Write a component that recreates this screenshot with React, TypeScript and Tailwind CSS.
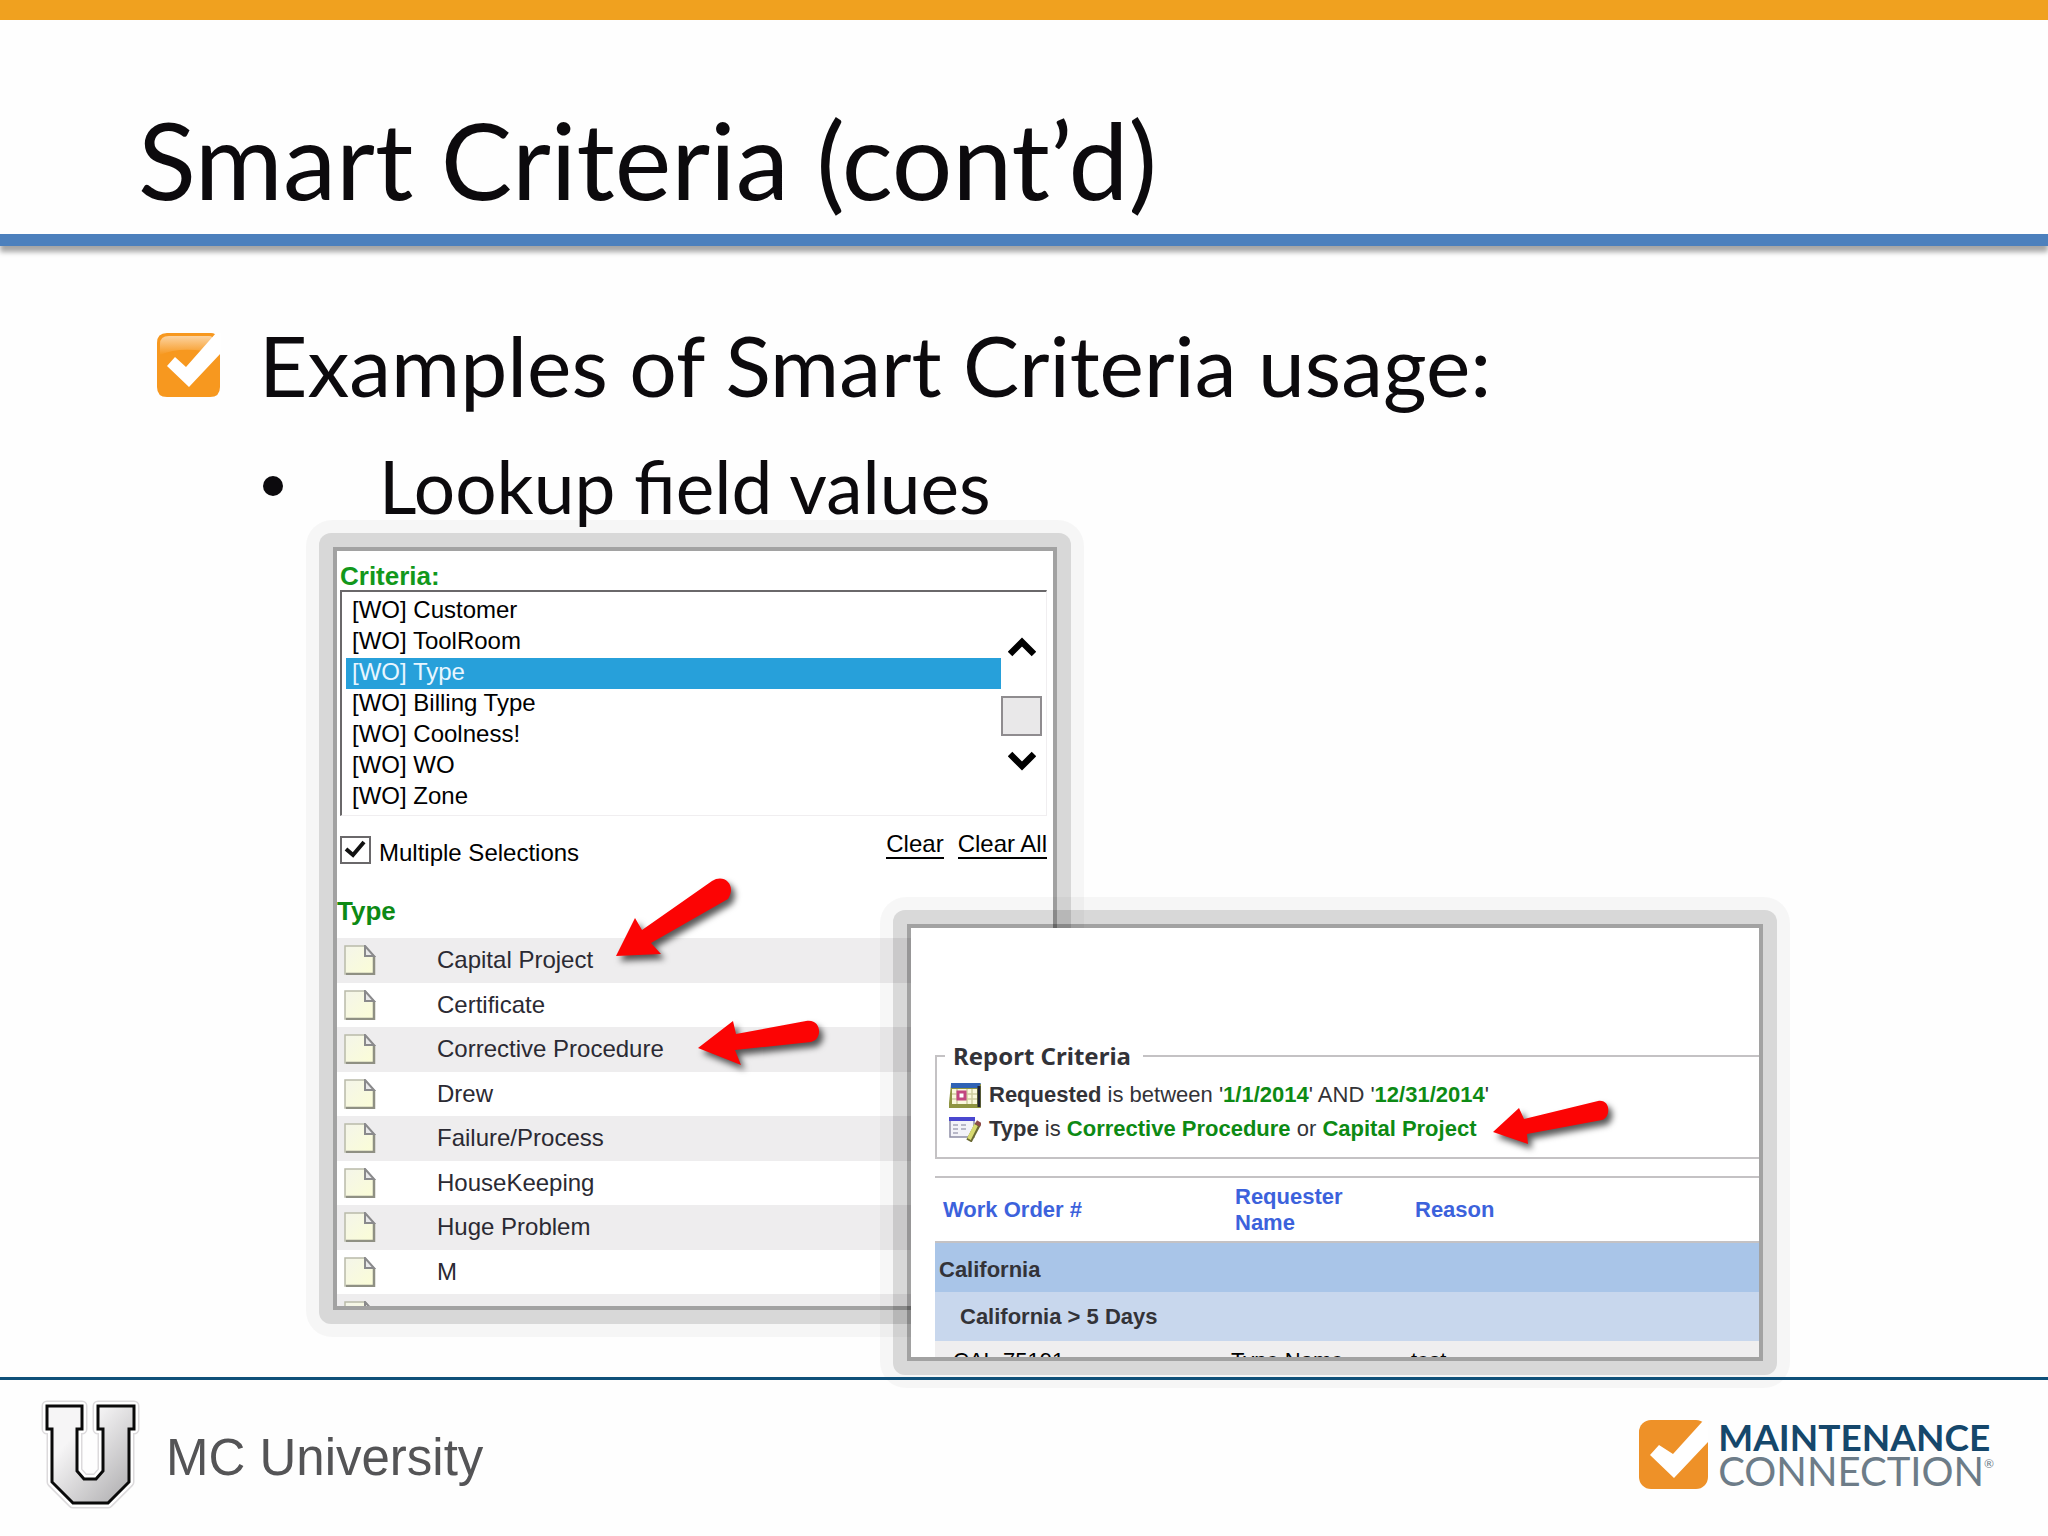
import type { ReactNode } from "react";

const criteria = ["Customer", "ToolRoom", "Type", "Billing Type", "Coolness!", "WO", "Zone"];

const types = [
   "Capital Project",
   "Certificate",
   "Corrective Procedure",
   "Drew",
   "Failure/Process",
   "HouseKeeping",
   "Huge Problem",
   "M",
];

function Frame({ children }: { children: ReactNode }) {
   return (
      <div className="rounded-[26px] bg-black/3 p-[13px]">
         <div className="rounded-xl bg-black/12 p-[14px]">
            <div className="bg-black/25 p-1">
               <div className="overflow-hidden bg-white">{children}</div>
            </div>
         </div>
      </div>
   );
}

function BulletCheck() {
   return (
      <svg className="size-16 shrink-0" viewBox="0 0 64 64" aria-hidden="true">
         <defs>
            <linearGradient id="gloss" x1="0" y1="0" x2="0" y2="1">
               <stop offset="0" stopColor="#fcd3a0" />
               <stop offset="1" stopColor="#f7981f" />
            </linearGradient>
         </defs>
         <path d="M10 0H54Q59 0 59 4L63 20V54Q63 64 53 64H10Q0 64 0 54V10Q0 0 10 0Z" fill="#f7981f" />
         <path d="M3 22V11Q3 3 12 3H52Q57 3 55 8L47 18Q20 14 3 22Z" fill="url(#gloss)" />
         <path d="M10 33L18 24L29 34L59 0H64V20L32 54Z" fill="#fff" />
      </svg>
   );
}

function PageIcon() {
   return (
      <svg className="h-[30px] w-8" viewBox="0 0 32 30" aria-hidden="true">
         <defs>
            <linearGradient id="paper" x1="0" y1="0" x2="1" y2="1">
               <stop offset="0" stopColor="#f4f5ea" />
               <stop offset="1" stopColor="#fbfdd6" />
            </linearGradient>
         </defs>
         <path d="M1 1H21L30 11V29H1Z" fill="url(#paper)" stroke="#b9baa9" strokeWidth="1.5" />
         <path d="M30 11V29H2" fill="none" stroke="#8f9083" strokeWidth="2.5" />
         <path d="M21 1L30 11H21Z" fill="#e9e9ea" stroke="#8a8a8c" strokeWidth="2" />
      </svg>
   );
}

function CalendarIcon() {
   return (
      <svg className="h-[25px] w-8 shrink-0" viewBox="0 0 32 25" aria-hidden="true">
         <path d="M2 1H32V25H0V20Z" fill="#8f9440" />
         <rect x="3" y="6" width="25" height="15" fill="#fbf8dc" />
         <path d="M3 11H28M3 16H28M8 6V21M18 6V21M23 6V21" stroke="#cfcda0" strokeWidth="1.5" />
         <path d="M2 0H32L29 5H2Z" fill="#2f62b5" />
         <path d="M30 3V24" stroke="#1f2130" strokeWidth="3" />
         <rect x="9" y="9" width="7" height="7" fill="#fff" stroke="#c2457f" strokeWidth="3" />
      </svg>
   );
}

function FormIcon() {
   return (
      <svg className="h-[25px] w-8 shrink-0" viewBox="0 0 32 25" aria-hidden="true">
         <rect x="1" y="1" width="24" height="19" fill="#f3f3f8" stroke="#8d8da5" strokeWidth="1.5" />
         <rect width="26" height="4" fill="#4a47cf" />
         <path d="M4 8H9M12 8H17M4 12H9M12 12H17M4 16H9" stroke="#b8b8c8" strokeWidth="2" />
         <path d="M29 7L20 24" stroke="#6b6a33" strokeWidth="6" />
         <path d="M27 8L20 22" stroke="#d8da70" strokeWidth="4" />
         <path d="M27 5L32 8" stroke="#8e4b48" strokeWidth="4" />
      </svg>
   );
}

function Chevron({ d }: { d: string }) {
   return (
      <svg className="h-[22px] w-7" viewBox="0 0 28 22" aria-hidden="true">
         <path d={d} fill="none" stroke="#000" strokeWidth="6.5" />
      </svg>
   );
}

function CriteriaPanel() {
   return (
      <Frame>
         <div className="h-[755px] w-[716px] text-2xl/[30px] text-black">
            <div className="pt-[11px] pr-1.5 pl-[3px]">
               <label htmlFor="criteria" className="block h-7 text-[26px]/7 font-bold text-[#12981c]">
                  Criteria:
               </label>
               <div className="flex h-[226px] border border-t-2 border-l-2 border-[#f0eef0] border-t-[#6a686a] border-l-[#6a686a] pt-1 pb-1.5 pl-1">
                  <select
                     id="criteria"
                     multiple
                     size={7}
                     defaultValue={["Type"]}
                     className="h-[214px] min-w-0 flex-1 appearance-none overflow-hidden bg-none p-0 outline-none"
                  >
                     {criteria.map((name) => (
                        <option
                           key={name}
                           value={name}
                           className="block h-[31px] min-h-0 p-0 pl-1.5 text-2xl/[34px] checked:bg-[linear-gradient(#27a0da,#27a0da)] checked:[-webkit-text-fill-color:#e8f6ff]"
                        >
                           [WO] {name}
                        </option>
                     ))}
                  </select>
                  <div className="flex w-[45px] flex-col items-center pt-10 pr-1">
                     <button aria-label="Scroll up">
                        <Chevron d="M2 18L14 6L26 18" />
                     </button>
                     <div className="mt-[38px] h-10 w-full border-2 border-[#8f8c8f] bg-[#e9e8e9]" />
                     <button aria-label="Scroll down" className="mt-3.5">
                        <Chevron d="M2 4L14 16L26 4" />
                     </button>
                  </div>
               </div>
               <div className="flex items-start justify-between pt-3.5">
                  <div className="flex items-start pt-1">
                     <span className="relative mt-0.5 flex">
                        <input
                           id="multiple"
                           type="checkbox"
                           defaultChecked
                           className="h-7 w-[31px] appearance-none border-2 border-[#6a686a] bg-white"
                        />
                        <svg className="pointer-events-none absolute inset-0" viewBox="0 0 31 28" aria-hidden="true">
                           <path d="M6 13L13 19L24 6" fill="none" stroke="#111" strokeWidth="4" />
                        </svg>
                     </span>
                     <label htmlFor="multiple" className="pt-1 pl-2">
                        Multiple Selections
                     </label>
                  </div>
                  <div className="flex gap-3.5">
                     <a href="#clear" className="border-b-2 border-black leading-[27px]">Clear</a>
                     <a href="#clear-all" className="border-b-2 border-black leading-[27px]">Clear All</a>
                  </div>
               </div>
            </div>
            <h2 className="mt-[29px] h-[41px] text-[26px]/7 font-bold text-[#0d8a14]">Type</h2>
            <ul className="grid h-[356px] auto-rows-fr">
               {types.map((name) => (
                  <li key={name} className="flex items-center pl-[7px] text-[#2b2a33] odd:bg-[#eeedee]">
                     <PageIcon />
                     <span className="pl-[61px]">{name}</span>
                  </li>
               ))}
            </ul>
            <div className="h-11 bg-[#eeedee] pt-[7px] pl-[7px]">
               <PageIcon />
            </div>
         </div>
      </Frame>
   );
}

function ReportPanel() {
   return (
      <Frame>
         <div className="h-[429px] w-[848px] pt-[114px] pl-6 text-[22px]/[26px] text-[#333338]">
            <fieldset className="h-[117px] border-2 border-r-0 border-[#c4c2c4] pl-3">
               <legend className="-ml-1 pr-3 pl-2 font-['Noto_Sans'] text-2xl/7 font-bold">Report Criteria</legend>
               <p className="mt-3 flex items-center gap-2">
                  <CalendarIcon />
                  <span>
                     <b>Requested</b> is between '<b className="text-[#0d8a14]">1/1/2014</b>' AND '
                     <b className="text-[#0d8a14]">12/31/2014</b>'
                  </span>
               </p>
               <p className="mt-2 flex items-center gap-2">
                  <FormIcon />
                  <span>
                     <b>Type</b> is <b className="text-[#0d8a14]">Corrective Procedure</b> or{" "}
                     <b className="text-[#0d8a14]">Capital Project</b>
                  </span>
               </p>
            </fieldset>
            <table className="mt-[17px] w-full table-fixed border-collapse text-left">
               <colgroup>
                  <col className="w-[292px]" />
                  <col className="w-[180px]" />
                  <col />
               </colgroup>
               <thead className="border-y-2 border-[#c4c2c4] text-[#3c62dc]">
                  <tr className="h-[65px]">
                     <th className="pl-2">Work Order #</th>
                     <th className="pr-10 pl-2">Requester Name</th>
                     <th className="pl-2">Reason</th>
                  </tr>
               </thead>
               <tbody>
                  <tr className="h-[50px] bg-[#a9c5e8]">
                     <th colSpan={3} className="pt-1 pl-1">California</th>
                  </tr>
                  <tr className="h-[49px] bg-[#c8d7ed]">
                     <th colSpan={3} className="pl-[25px]">California &gt; 5 Days</th>
                  </tr>
                  <tr className="h-10 bg-[#efeeef] text-black">
                     <td className="pl-[18px]">CAL-75191</td>
                     <td className="pl-1">Type Name</td>
                     <td className="pl-1">test</td>
                  </tr>
               </tbody>
            </table>
         </div>
      </Frame>
   );
}

function Arrows() {
   return (
      <svg
         className="pointer-events-none absolute top-[330px] left-[280px] h-[350px] w-[1100px] drop-shadow-[4px_5px_3px_rgba(0,0,0,0.65)]"
         viewBox="586 850 1100 350"
         fill="#fc0404"
         aria-hidden="true"
      >
         <path d="M616 956L635 918L642 930L712 881C724 873 737 885 728 899L651 943L661 954Z" />
         <path d="M698 1048L733 1021L736 1034L806 1021C822 1018 823 1040 811 1042L735 1050L741 1065Z" />
         <path d="M1493 1132L1519 1108L1524 1119L1598 1101C1611 1099 1611 1117 1602 1120L1527 1134L1528 1144Z" />
      </svg>
   );
}

function UniversityLogo() {
   const shape = "M7 7H42V30H37V72L44 80H56L63 72V30H58V7H94V30H89V83L68 104H33L12 83V30H7Z";
   return (
      <svg className="h-[110px] w-[102px]" viewBox="0 0 102 110" aria-hidden="true">
         <defs>
            <linearGradient id="steel" x1="0" y1="0" x2="1" y2="1">
               <stop offset="0.3" stopColor="#f6f5f6" />
               <stop offset="1" stopColor="#a9a8aa" />
            </linearGradient>
         </defs>
         <path d={shape} fill="none" stroke="#dcdadc" strokeWidth="11" strokeLinejoin="round" />
         <path d={shape} fill="none" stroke="#fff" strokeWidth="8" strokeLinejoin="round" />
         <path d={shape} fill="url(#steel)" stroke="#0a0a0a" strokeWidth="3" />
      </svg>
   );
}

function BrandLogo() {
   return (
      <div className="flex items-center gap-2.5 font-[Lato] text-[37px]/[35px]">
         <svg className="size-[69px]" viewBox="0 0 69 69" aria-hidden="true">
            <rect width="69" height="69" rx="12" fill="#ee9128" />
            <path d="M11 35L20 25L34 34L63 2L69 0V22L35 58Z" fill="#fff" />
         </svg>
         <div>
            <p className="font-bold text-[#15476b]">MAINTENANCE</p>
            <p className="flex text-[40px] text-[#6d7c88]">
               CONNECTION<sup className="top-0 pt-1 text-xs/3">®</sup>
            </p>
         </div>
      </div>
   );
}

export default function App() {
   return (
      <main className="flex min-h-screen flex-col overflow-hidden bg-[#fefefe] font-['Liberation_Sans',sans-serif]">
         <header className="border-t-[20px] border-b-[12px] border-[#f0a11f] border-b-[#4c80bd] shadow-[0_6px_5px_rgba(0,0,0,0.35)]">
            <h1 className="px-[138px] pt-[79px] pb-[15px] font-[Lato] text-[107px]/[120px] text-[#0c0a0d]">
               Smart Criteria (cont’d)
            </h1>
         </header>
         <section className="flex-1 px-[157px] pt-[71px] font-[Lato] text-[#0c0a0d]">
            <div className="flex items-center gap-[38px]">
               <BulletCheck />
               <h2 className="text-[84px]/[96px]">Examples of Smart Criteria usage:</h2>
            </div>
            <ul className="pt-[31px] pl-[106px]">
               <li className="flex items-center gap-24 text-[73px]/[84px]">
                  <span className="size-5 rounded-full bg-[#0c0a0d]" />
                  Lookup field values
               </li>
            </ul>
            <div className="relative -mt-2 ml-[149px] h-[856px] font-['Liberation_Sans',sans-serif]">
               <div className="absolute top-0 left-0">
                  <CriteriaPanel />
               </div>
               <div className="absolute top-[377px] left-[574px]">
                  <ReportPanel />
               </div>
               <Arrows />
            </div>
         </section>
         <footer className="relative flex h-[159px] items-center justify-between border-t-[3px] border-[#0f5079] pr-[54px] pb-2 pl-10">
            <div className="flex items-center gap-6">
               <UniversityLogo />
               <p className="pt-2 text-[51px]/[60px] text-[#545456]">MC University</p>
            </div>
            <BrandLogo />
         </footer>
      </main>
   );
}
